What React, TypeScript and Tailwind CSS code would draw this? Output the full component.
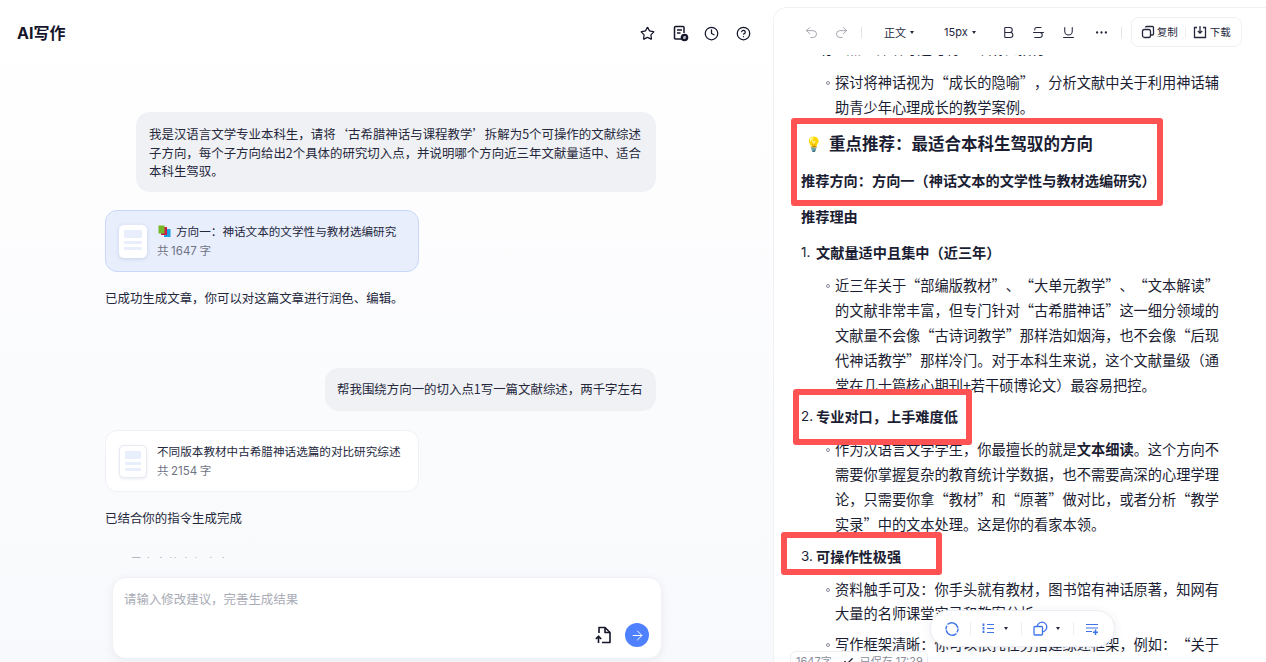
import { Star, Clock, CircleHelp, Undo2, Redo2, Bold, Strikethrough, Underline, Ellipsis, ArrowRight, Check } from 'lucide-react'
import type { ReactNode } from 'react'

function Latin({ children }: { children: ReactNode }) {
  return <span className="font-['Inter',sans-serif]">{children}</span>
}

function DocThumb({ active }: { active?: boolean }) {
  return (
    <div className={`flex h-[33px] w-[28px] shrink-0 flex-col gap-[3px] rounded-[5px] bg-white p-[5px] ${active ? 'shadow-[0_1px_4px_rgba(80,100,160,0.2)]' : 'border border-[#e8eaf2] shadow-[0_1px_3px_rgba(80,100,160,0.12)]'}`}>
      <div className="h-[8px] rounded-[1px] bg-[#e8eefc]" />
      <div className="h-[3px] rounded-[1px] bg-[#e8eefc]" />
      <div className="h-[3px] rounded-[1px] bg-[#e8eefc]" />
    </div>
  )
}

function BooksEmoji() {
  return (
    <svg width="13" height="13" viewBox="0 0 13 13" className="ml-[1px] mr-[5px] shrink-0">
      <rect x="6" y="4" width="6.5" height="8" fill="#1e9fe0" />
      <rect x="3" y="2" width="6" height="8" fill="#c81e4a" />
      <rect x="0.5" y="0.5" width="6" height="8" fill="#76b82a" />
    </svg>
  )
}

function ResultCard({ active, title, count }: { active?: boolean; title: string; count: string }) {
  return (
    <div className={`flex h-[62px] w-[314px] items-center gap-[10px] rounded-[12px] border pl-[13px] ${active ? 'border-[#c9d8fa] bg-[#e8eefc]' : 'border-[#f0f1f6] bg-white'}`}>
      <DocThumb active={active} />
      <div className="-mt-px">
        <div className="flex items-center whitespace-nowrap text-[11.6px] leading-[18px] text-[#25283d]">
          {active && <BooksEmoji />}
          {title}
        </div>
        <div className="mt-[2px] text-[11.5px] leading-[16px] text-[#6f7385]">
          共 <Latin>{count}</Latin> 字
        </div>
      </div>
    </div>
  )
}

function DocWithBadge() {
  return (
    <div className="w-[15px]">
      <svg width="17" height="17" viewBox="0 0 17 17" fill="none" stroke="#14162b" strokeWidth="1.5">
        <path d="M10 14H3.5A1 1 0 0 1 2.5 13V2.5A1 1 0 0 1 3.5 1.5H11A1 1 0 0 1 12 2.5V8" />
        <path d="M5 5h5M5 8h3.5" />
        <circle cx="12.5" cy="12.5" r="3.8" fill="#14162b" stroke="none" />
        <path d="M11.5 11.5h2v1h-2v1h2" stroke="#fff" strokeWidth="0.7" />
      </svg>
    </div>
  )
}

function FileUpload() {
  return (
    <svg width="18" height="18" viewBox="0 0 18 18" fill="none" stroke="#14162b" strokeWidth="1.6" strokeLinejoin="round">
      <path d="M5 7V1.5H11L16 6.5V16.5H8" />
      <path d="M11 1.5V6.5H16" />
      <path d="M4.5 17V10.5M1.8 13L4.5 10.2L7.2 13" />
    </svg>
  )
}

function CopyIcon() {
  return (
    <svg width="14" height="14" viewBox="0 0 14 14" fill="none" stroke="#25283d" strokeWidth="1.3" strokeLinejoin="round">
      <path d="M4.5 2.5A1 1 0 0 1 5.5 1.5H11.5A1 1 0 0 1 12.5 2.5V9A1 1 0 0 1 11.5 10H9.5" />
      <rect x="1.5" y="4.5" width="8" height="8" rx="2" />
    </svg>
  )
}

function DownloadIcon() {
  return (
    <svg width="14" height="14" viewBox="0 0 14 14" fill="none" stroke="#25283d" strokeWidth="1.3">
      <path d="M4 2.5H1.5V12.5H12.5V2.5H10" />
      <path d="M7 1V8M4.8 6L7 8.2L9.2 6" />
    </svg>
  )
}

function Caret({ className = 'ml-[4px]' }: { className?: string }) {
  return <span className={`inline-block border-x-[2.5px] border-t-[3px] border-x-transparent border-t-[#25283d] align-middle ${className}`} />
}

function SubItem({ children, className = '' }: { children: ReactNode; className?: string }) {
  return (
    <div className={`flex pl-[25px] ${className}`}>
      <span className="mr-[5px] mt-[11px] h-[4px] w-[4px] shrink-0 rounded-full border border-[#8a8c99]" />
      <p className="w-[390px] text-[14.22px] leading-[24.8px]">{children}</p>
    </div>
  )
}

function NumberedHead({ n, text, className }: { n: string; text: string; className: string }) {
  return (
    <div className={`flex text-[14.2px] leading-[24px] ${className}`}>
      <span className="w-[15px] font-['Inter',sans-serif] text-[13.4px] font-normal">{n}</span>
      <span className="font-bold">{text}</span>
    </div>
  )
}

function PillDivider({ className }: { className: string }) {
  return <span className={`h-[13px] w-px bg-[#eceef3] ${className}`} />
}

export default function App() {
  return (
    <div lang="zh-CN" className="flex h-[662px] w-[1266px] overflow-hidden bg-white font-['Noto_Sans_CJK_SC','Inter',sans-serif] text-[#14162b] [text-spacing-trim:space-all]">
      <div className="flex w-[773px] shrink-0 flex-col bg-gradient-to-b from-white to-[#f8f9fc]">
        <header className="flex h-[66px] shrink-0 items-center justify-between pl-[17px] pr-[22px]">
          <h1 className="-mt-px text-[16px] font-bold"><Latin>AI</Latin>写作</h1>
          <div className="flex items-center gap-[17px]">
            <Star size={15} strokeWidth={2} />
            <DocWithBadge />
            <Clock size={15} strokeWidth={2} />
            <CircleHelp size={15} strokeWidth={2} />
          </div>
        </header>

        <div className="relative h-[492px] shrink-0 overflow-hidden pl-[105px] pr-[117px] pt-[46px] text-[12.45px] text-[#25283d]">
          <div className="ml-[31px] h-[80px] rounded-[14px] bg-[#f0f1f4] px-[13px] py-[13px] leading-[18.7px]">
            我是汉语言文学专业本科生，请将‘古希腊神话与课程教学’拆解为5个可操作的文献综述子方向，每个子方向给出2个具体的研究切入点，并说明哪个方向近三年文献量适中、适合本科生驾驭。
          </div>
          <div className="mt-[18px]">
            <ResultCard active title="方向一：神话文本的文学性与教材选编研究" count="1647" />
          </div>
          <p className="mt-[17px] leading-[18px]">已成功生成文章，你可以对这篇文章进行润色、编辑。</p>
          <div className="ml-[220px] mt-[61px] flex h-[43px] items-center rounded-[14px] bg-[#f0f1f4] px-[12px]">
            帮我围绕方向一的切入点1写一篇文献综述，两千字左右
          </div>
          <div className="mt-[19px]">
            <ResultCard title="不同版本教材中古希腊神话选篇的对比研究综述" count="2154" />
          </div>
          <p className="mt-[17px] leading-[18px]">已结合你的指令生成完成</p>
          <p className="mt-[27px] leading-[18px] opacity-40">下面是文章的全部内容</p>
        </div>

        <div className="flex-1 pl-[112px] pr-[111px] pt-[19px]">
          <div className="flex h-[82px] flex-col rounded-[14px] border border-[#f1f2f6] bg-white px-[12px] pt-[12px] shadow-[0_2px_8px_rgba(60,70,110,0.07)]">
            <div className="-ml-px text-[12.45px] leading-[18px] text-[#a9abb6]">请输入修改建议，完善生成结果</div>
            <div className="mt-auto mb-[11px] flex items-center justify-end gap-[13px]">
              <FileUpload />
              <div className="flex h-[24px] w-[24px] items-center justify-center rounded-full bg-[#4f81ff]">
                <ArrowRight size={15} color="#fff" strokeWidth={1.6} />
              </div>
            </div>
          </div>
        </div>
      </div>

      <div className="relative mt-[7px] flex min-w-0 flex-1 flex-col overflow-hidden rounded-tl-[14px] border-l border-t border-[#f0f1f5] bg-white">
        <div className="flex h-[47px] shrink-0 items-start bg-white pl-[30px] pt-[9px] text-[#25283d]">
          <div className="flex h-[30px] items-center">
            <Undo2 size={15} strokeWidth={1.4} color="#9a9ca8" />
            <Redo2 size={15} strokeWidth={1.4} color="#9a9ca8" className="ml-[15px]" />
            <span className="ml-[12px] h-[11px] w-px bg-[#e3e4ea]" />
            <div className="ml-[22px] flex items-center text-[11px]">正文<Caret /></div>
            <div className="ml-[30px] flex items-center text-[11px]"><Latin>15px</Latin><Caret /></div>
            <Bold size={15} strokeWidth={1.7} className="ml-[25px]" />
            <Strikethrough size={15} strokeWidth={1.7} className="ml-[15px]" />
            <Underline size={15} strokeWidth={1.7} className="ml-[15px]" />
            <Ellipsis size={15} strokeWidth={1.7} className="ml-[18px]" />
            <span className="ml-[12px] h-[11px] w-px bg-[#e3e4ea]" />
            <div className="ml-[9px] flex h-[30px] w-[111px] items-center rounded-[8px] border border-[#f0f1f5] pl-[9px] text-[10.5px]">
              <CopyIcon />
              <span className="ml-[2px]">复制</span>
              <span className="mx-[7px] h-[11px] w-px bg-[#eceef3]" />
              <DownloadIcon />
              <span className="ml-[3px]">下载</span>
            </div>
          </div>
        </div>

        <div className="min-h-0 flex-1 overflow-hidden pl-[27px] text-[#1b1d33]">
          <div className="-mt-[19px]">
            <p className="ml-[17px] text-[14.22px] leading-[24.8px]">切入点：神话母题与青少年成长教育</p>
            <SubItem className="mt-[9px]">探讨将神话视为“成长的隐喻”，分析文献中关于利用神话辅助青少年心理成长的教学案例。</SubItem>
            <h2 className="mt-[12px] flex items-center text-[16.5px] font-bold leading-[24px]">
              <span className="ml-[4px] mr-[7px] text-[14px] leading-none">💡</span>
              重点推荐：最适合本科生驾驭的方向
            </h2>
            <p className="mt-[13px] text-[14.2px] font-bold leading-[24px]">推荐方向：方向一（神话文本的文学性与教材选编研究）</p>
            <p className="mt-[12px] text-[14.2px] font-bold leading-[24px]">推荐理由</p>
            <NumberedHead n="1." text="文献量适中且集中（近三年）" className="mt-[12px]" />
            <SubItem className="mt-[9px]">
              近三年关于“部编版教材”、“大单元教学”、“文本解读”的文献非常丰富，但专门针对“古希腊神话”这一细分领域的文献量不会像“古诗词教学”那样浩如烟海，也不会像“后现代神话教学”那样冷门。对于本科生来说，这个文献量级（通常在几十篇核心期刊+若干硕博论文）最容易把控。
            </SubItem>
            <NumberedHead n="2." text="专业对口，上手难度低" className="mt-[7px]" />
            <SubItem className="mt-[9px]">
              作为汉语言文学学生，你最擅长的就是<b>文本细读</b>。这个方向不需要你掌握复杂的教育统计学数据，也不需要高深的心理学理论，只需要你拿“教材”和“原著”做对比，或者分析“教学实录”中的文本处理。这是你的看家本领。
            </SubItem>
            <NumberedHead n="3." text="可操作性极强" className="mt-[7px]" />
            <SubItem className="mt-[9px]">
              资料触手可及：你手头就有教材，图书馆有神话原著，知网有大量的名师课堂实录和教案分析。
            </SubItem>
            <SubItem className="mt-[6px]">写作框架清晰：你可以依托任务搭建综述框架，例如：“关于</SubItem>
          </div>
        </div>

        {/* annotation frames drawn on top of the document */}
        <div className="absolute left-[17px] top-[110px] h-[88px] w-[372px] rounded-[3px] border-[6px] border-[#ff5252]" />
        <div className="absolute left-[19px] top-[381px] h-[56px] w-[179px] rounded-[3px] border-[6px] border-[#ff5252]" />
        <div className="absolute left-[7px] top-[524px] h-[43px] w-[161px] rounded-[3px] border-[6px] border-[#ff5252]" />

        <div className="absolute left-[16px] top-[643px] flex h-[20px] w-[138px] items-center whitespace-nowrap rounded-[6px] border border-[#eceef3] bg-white px-[5px] text-[11px] text-[#8a8d9c]">
          <Latin>1647</Latin>字
          <span className="mx-[5px] h-[10px] w-px bg-[#e3e4ea]" />
          <Check size={11} strokeWidth={2.6} color="#14162b" className="ml-[1px] mr-[6px] shrink-0" />
          已保存 <Latin>&nbsp;17:29</Latin>
        </div>

        <div className="absolute left-[156px] top-[602px] flex h-[37px] w-[185px] items-center rounded-full border border-[#eceef3] bg-white pl-[14px] shadow-[0_2px_10px_rgba(60,70,110,0.1)]">
          <svg width="14" height="14" viewBox="0 0 14 14" fill="none" stroke="#3f74e8" strokeWidth="1.4" strokeLinecap="round">
            <path d="M12.6 5.4A6 6 0 0 0 3 2.1" />
            <path d="M1.4 8.6A6 6 0 0 0 11 11.9" />
            <path d="M1 7A6 6 0 0 1 1.7 4.2M13 7A6 6 0 0 1 12.3 9.8" />
          </svg>
          <PillDivider className="ml-[11px]" />
          <svg width="13" height="13" viewBox="0 0 13 13" fill="none" stroke="#3f74e8" className="ml-[11px]">
            <path d="M1.5 1.5v10" strokeWidth="1.8" strokeDasharray="2.5 1" />
            <path d="M5 2.5h7M5 6.5h7M5 10.5h7" strokeWidth="1" />
          </svg>
          <Caret className="ml-[9px]" />
          <PillDivider className="ml-[13px]" />
          <svg width="15" height="15" viewBox="0 0 15 15" fill="none" stroke="#3f74e8" strokeWidth="1.3" className="ml-[11px]">
            <circle cx="9" cy="6" r="4.8" />
            <rect x="1" y="5.5" width="8.5" height="8.5" rx="1" fill="#fff" />
          </svg>
          <Caret className="ml-[8px]" />
          <PillDivider className="ml-[13px]" />
          <svg width="14" height="14" viewBox="0 0 14 14" fill="none" stroke="#3f74e8" strokeWidth="1.2" className="ml-[11px]">
            <path d="M1 2.5h12M1 6h12M1 9.5h6" />
            <path d="M10.5 7.5v5.5M8 10.2h5" strokeWidth="1.5" />
          </svg>
        </div>
      </div>
    </div>
  )
}
